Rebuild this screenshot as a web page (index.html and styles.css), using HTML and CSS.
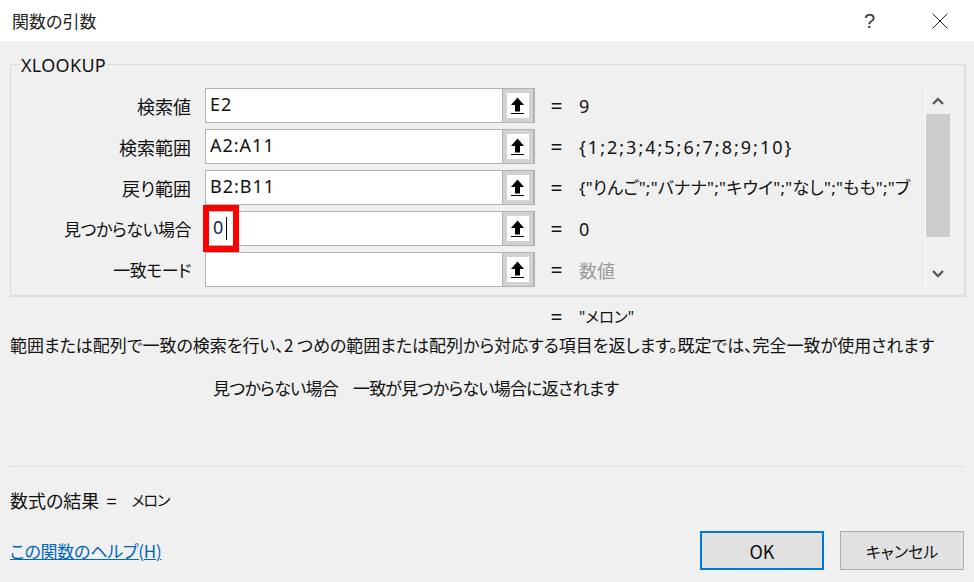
FILE: index.html
```html
<!DOCTYPE html>
<html lang="ja">
<head>
  <meta charset="UTF-8" />
  <title>関数の引数</title>
  <link rel="stylesheet" href="styles.css">
</head>
<body>
  <div class="titlebar">
    <span class="title">関数の引数</span>
    <span class="help-mark">?</span>
    <svg class="close-x" width="16" height="16" viewBox="0 0 16 16"><path d="M.5.5l15 15M15.5.5l-15 15" stroke="#222" fill="none"/></svg>
  </div>

  <div class="dialog">
    <fieldset class="group">
      <legend>XLOOKUP</legend>
      <div class="args">
        <div class="rows">
          <div class="row">
            <span class="label label-kanji">検索値</span>
            <div class="field"><span class="field-text">E2</span><span class="ref-btn"><svg width="22" height="24" viewBox="0 0 22 24"><path d="M10.5 3.5L17 11h-4v6.5H8V11H4zM4 19h13v1H4z" fill="#000"/></svg></span></div>
            <span class="eq">=</span>
            <span class="val">9</span>
          </div>
          <div class="row">
            <span class="label label-kanji">検索範囲</span>
            <div class="field"><span class="field-text">A2:A11</span><span class="ref-btn"><svg width="22" height="24" viewBox="0 0 22 24"><path d="M10.5 3.5L17 11h-4v6.5H8V11H4zM4 19h13v1H4z" fill="#000"/></svg></span></div>
            <span class="eq">=</span>
            <span class="val val-list">{1;2;3;4;5;6;7;8;9;10}</span>
          </div>
          <div class="row">
            <span class="label label-kanji">戻り範囲</span>
            <div class="field"><span class="field-text">B2:B11</span><span class="ref-btn"><svg width="22" height="24" viewBox="0 0 22 24"><path d="M10.5 3.5L17 11h-4v6.5H8V11H4zM4 19h13v1H4z" fill="#000"/></svg></span></div>
            <span class="eq">=</span>
            <span class="val val-text">{"りんご";"バナナ";"キウイ";"なし";"もも";"ブ</span>
          </div>
          <div class="row">
            <span class="label label-kana">見つからない場合</span>
            <div class="field"><span class="field-text zero">0</span><span class="caret"></span><span class="highlight"></span><span class="ref-btn"><svg width="22" height="24" viewBox="0 0 22 24"><path d="M10.5 3.5L17 11h-4v6.5H8V11H4zM4 19h13v1H4z" fill="#000"/></svg></span></div>
            <span class="eq">=</span>
            <span class="val">0</span>
          </div>
          <div class="row">
            <span class="label label-kana">一致モード</span>
            <div class="field"><span class="field-text"></span><span class="ref-btn"><svg width="22" height="24" viewBox="0 0 22 24"><path d="M10.5 3.5L17 11h-4v6.5H8V11H4zM4 19h13v1H4z" fill="#000"/></svg></span></div>
            <span class="eq">=</span>
            <span class="val muted">数値</span>
          </div>
        </div>
        <div class="scrollbar">
          <svg class="arrow" width="12" height="8" viewBox="0 0 12 8"><path d="M1 7l5-5 5 5" stroke="#5a5a5a" stroke-width="2.4" fill="none"/></svg>
          <div class="track"><div class="thumb"></div></div>
          <svg class="arrow" width="12" height="8" viewBox="0 0 12 8"><path d="M1 1l5 5 5-5" stroke="#5a5a5a" stroke-width="2.4" fill="none"/></svg>
        </div>
      </div>
    </fieldset>

    <div class="row-result">
      <span class="eq">=</span>
      <span class="val val-melon">"メロン"</span>
    </div>
    <p class="desc">範囲または配列で一致の検索を行い、2 つめの範囲または配列から対応する項目を返します。既定では、完全一致が使用されます</p>
    <p class="arg-desc"><span>見つからない場合</span><span>一致が見つからない場合に返されます</span></p>

    <div class="result"><span class="result-label">数式の結果 =</span><span class="result-val">メロン</span></div>

    <div class="footer">
      <a class="help-link" href="#">この関数のヘルプ(H)</a>
      <div class="buttons">
        <button class="btn btn-default">OK</button>
        <button class="btn btn-cancel">キャンセル</button>
      </div>
    </div>
  </div>
</body>
</html>
```

FILE: styles.css
```css
* { margin: 0; padding: 0; box-sizing: border-box; }

body {
  width: 974px;
  height: 582px;
  overflow: hidden;
  background: #f0f0f0;
  color: #111;
  font-family: "Noto Sans CJK JP", "Noto Sans", sans-serif;
  font-size: 17px;
  line-height: 22px;
  font-feature-settings: "palt";
}

.titlebar {
  height: 41px;
  background: #fff;
  display: flex;
  align-items: center;
  padding: 0 26px 0 12px;
}
.title { flex: 1; color: #222; }
.help-mark { margin-right: 57px; font-size: 20px; color: #333; font-family: "Liberation Sans", sans-serif; }
.close-x { display: block; }

.dialog { padding: 0 10px; }

.group {
  height: 244px;
  margin-top: 12px;
  border: 2px solid #dcdcdc;
  border-width: 1px 2px 2px 1px;
  padding: 0 14px 0 0;
}
.group legend {
  margin-left: 9px;
  padding: 2px 1px 0;
  font-family: "Noto Sans", sans-serif;
  font-size: 18px;
  line-height: 20px;
  letter-spacing: .3px;
}

.args { display: flex; margin-top: 13px; }
.rows { width: 914px; display: flex; flex-direction: column; gap: 6px; }

.row {
  height: 35px;
  display: flex;
  align-items: center;
}
.label {
  width: 180px;
  text-align: right;
  white-space: nowrap;
}
.label-kanji { font-size: 18px; }
.label-kana { letter-spacing: -.5px; }
.field {
  position: relative;
  width: 330px;
  height: 35px;
  margin-left: 14px;
  background: #fff;
  border: 2px solid #b2b2b2;
  border-width: 1px 2px 1px 1px;
  display: flex;
  align-items: center;
}
.field-text {
  flex: 1;
  padding: 0 0 3px 4px;
  font-family: "Noto Sans", sans-serif;
  font-size: 18px;
  letter-spacing: 1px;
}
.field-text.zero { flex: none; padding-left: 7px; letter-spacing: 0; color: #0c2c55; }
.caret { width: 1px; height: 23px; margin-left: 3px; background: #000; flex: none; }
.highlight {
  position: absolute;
  left: -3px;
  top: -7px;
  width: 36px;
  height: 47px;
  border: 6px solid #f00;
}
.ref-btn {
  margin-left: auto;
  width: 31px;
  height: 33px;
  flex: none;
  background: #fff;
  border-left: 1px solid #b2b2b2;
  box-shadow: inset 0 0 0 4px #d2d2d2;
  display: flex;
  align-items: center;
  justify-content: center;
}
.eq {
  width: 17px;
  margin-left: 13px;
  text-align: center;
  font-size: 21px;
  font-family: "Noto Sans", sans-serif;
}
.val {
  margin-left: 14px;
  white-space: nowrap;
  font-size: 18px;
  font-family: "Noto Sans", "Noto Sans CJK JP", sans-serif;
}
.val-list { letter-spacing: 2px; }
.val-text { font-size: 17px; letter-spacing: .25px; }
.val-melon { font-size: 15.5px; }
.muted { color: #9a9a9a; font-family: "Noto Sans CJK JP", sans-serif; }

.scrollbar {
  width: 25px;
  height: 199px;
  border-left: 1px solid #fff;
  display: flex;
  flex-direction: column;
  align-items: center;
}
.arrow { flex: none; margin: 9px 0; }
.track { flex: 1; width: 100%; }
.thumb { height: 123px; background: #cdcdcd; }

.row-result { display: flex; height: 22px; margin-top: 9px; margin-left: 525px; }

.desc { margin-top: 6px; white-space: nowrap; letter-spacing: -.02px; }
.arg-desc { margin-top: 21px; margin-left: 203px; display: flex; gap: 15px; white-space: nowrap; letter-spacing: -.75px; }

.result {
  margin-top: 67px;
  padding-top: 22px;
  border-top: 1px solid #dcdcdc;
  white-space: nowrap;
  display: flex;
}
.result-label { font-size: 18px; word-spacing: 3px; }
.result-val { margin-left: 15px; font-size: 15px; letter-spacing: -1px; }

.footer {
  margin-top: 20px;
  display: flex;
  justify-content: space-between;
  align-items: center;
}
.help-link { color: #0067c0; text-decoration: underline; letter-spacing: -.25px; }
.buttons { display: flex; gap: 16px; }
.btn {
  width: 124px;
  height: 39px;
  background: #e1e1e1;
  border: 1px solid #adadad;
  font: inherit;
  color: #111;
}
.btn-default { border: 2px solid #0078d7; font-size: 18px; }
.btn-cancel { font-size: 16px; }
```
